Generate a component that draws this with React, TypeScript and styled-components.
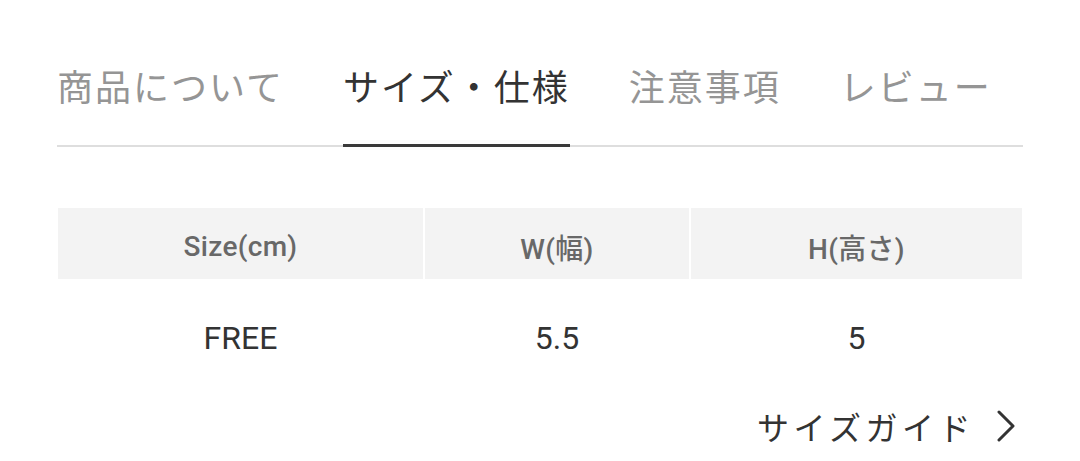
import React from "react";
import styled, { createGlobalStyle } from "styled-components";

const Global = createGlobalStyle`
  html, body { margin: 0; padding: 0; background: #fff; }
  body { font-family: Roboto, "Noto Sans CJK JP", sans-serif; }
`;

const Page = styled.div`
  width: 1080px;
  height: 461px;
  box-sizing: border-box;
  padding: 67px 57px 0;
  overflow: hidden;
`;

const TabBar = styled.div`
  display: flex;
  gap: 59px;
  border-bottom: 2px solid #dedede;
`;

const Tab = styled.div<{ $active?: boolean }>`
  font-family: "Noto Sans CJK JP", sans-serif;
  font-size: 36px;
  line-height: 36px;
  letter-spacing: 2px;
  padding-bottom: 41px;
  margin-bottom: -2px;
  color: ${(p) => (p.$active ? "#333" : "#959595")};
  border-bottom: 3px solid ${(p) => (p.$active ? "#3a3a3a" : "transparent")};
  white-space: nowrap;
`;

const Table = styled.div`
  margin: 61px 1px 0;
  display: grid;
  grid-template-columns: 365px 264px 331px;
  column-gap: 2px;
`;

const HeadCell = styled.div`
  height: 71px;
  background: #f3f3f3;
  display: flex;
  align-items: center;
  justify-content: center;
  box-sizing: border-box;
  padding-top: 6px;
  font-family: Roboto, "Noto Sans CJK JP", sans-serif;
  font-size: 28px;
  font-weight: 500;
  letter-spacing: 0.3px;
  color: #686868;
`;

const BodyCell = styled.div`
  height: 118px;
  display: flex;
  align-items: center;
  justify-content: center;
  font-family: Roboto, "Noto Sans CJK JP", sans-serif;
  font-size: 32px;
  color: #333;
`;

const GuideRow = styled.div`
  display: flex;
  justify-content: flex-end;
  margin-top: 12px;
  padding-right: 7px;
`;

const GuideLink = styled.a`
  display: flex;
  align-items: center;
  gap: 22px;
  font-family: "Noto Sans CJK JP", sans-serif;
  font-size: 32px;
  line-height: 34px;
  letter-spacing: 4.5px;
  color: #333;
  text-decoration: none;
`;

const Chevron = () => (
  <svg width="19" height="32" viewBox="0 0 19 32" fill="none">
    <polyline points="2,2 16,16 2,30" stroke="#333" strokeWidth="3" strokeLinecap="round" strokeLinejoin="round" />
  </svg>
);

const tabs = ["商品について", "サイズ・仕様", "注意事項", "レビュー"];
const heads = ["Size(cm)", "W(幅)", "H(高さ)"];
const row = ["FREE", "5.5", "5"];

export default function App() {
  return (
    <>
      <Global />
      <Page>
        <TabBar>
          {tabs.map((t, i) => (
            <Tab key={t} $active={i === 1}>
              {t}
            </Tab>
          ))}
        </TabBar>
        <Table>
          {heads.map((h) => (
            <HeadCell key={h}>{h}</HeadCell>
          ))}
          {row.map((v, i) => (
            <BodyCell key={i}>{v}</BodyCell>
          ))}
        </Table>
        <GuideRow>
          <GuideLink href="#">
            サイズガイド
            <Chevron />
          </GuideLink>
        </GuideRow>
      </Page>
    </>
  );
}
